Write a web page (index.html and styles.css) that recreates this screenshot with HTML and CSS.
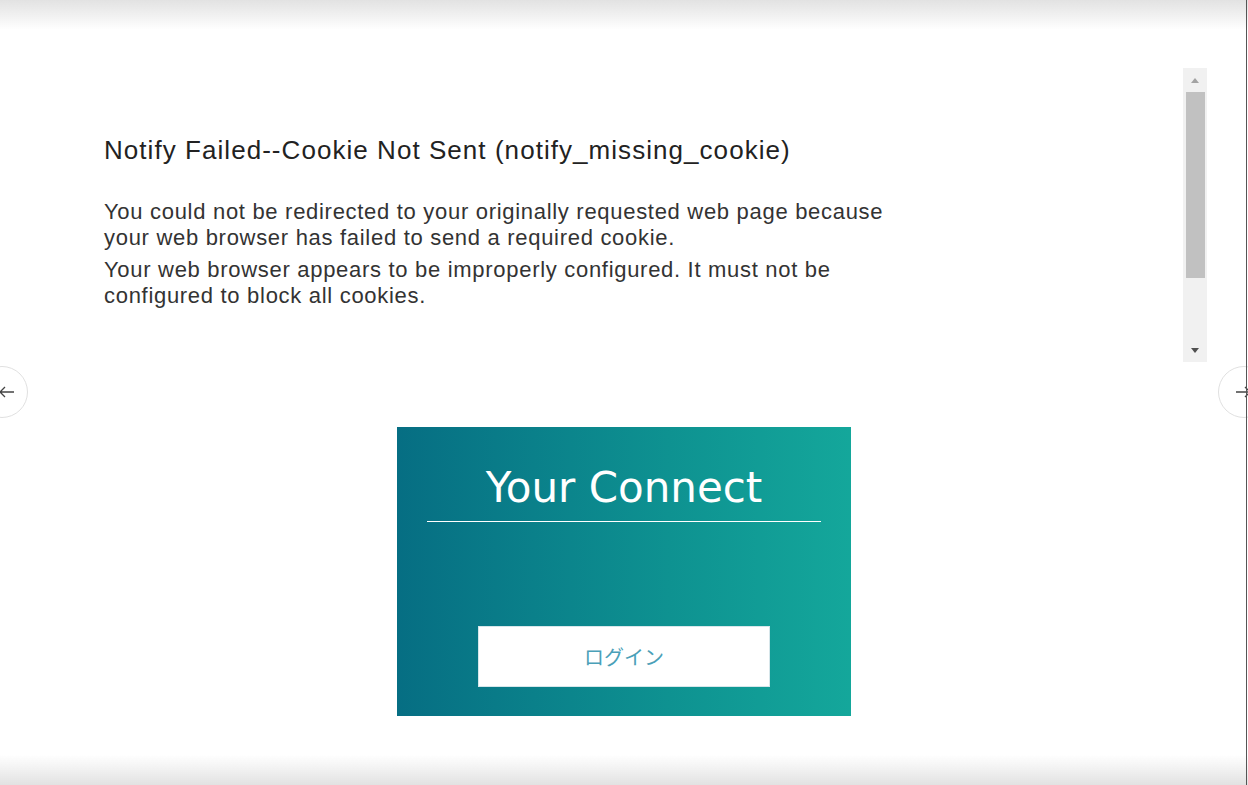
FILE: index.html
```html
<!DOCTYPE html>
<html lang="ja">
<head>
<meta charset="UTF-8" />
<meta name="viewport" content="width=device-width, initial-scale=1" />
<title>Your Connect</title>
<link rel="stylesheet" href="styles.css">
</head>
<body>

<div class="shade shade-top"></div>

<div class="stage">
  <!-- エラーメッセージ枠 -->
  <div class="frame">
    <div class="frame-body">
      <h1 class="err-title">Notify Failed--Cookie Not Sent (notify_missing_cookie)</h1>
      <p>You could not be redirected to your originally requested web page because your web browser has failed to send a required cookie.</p>
      <p>Your web browser appears to be improperly configured. It must not be configured to block all cookies.</p>
    </div>
    <div class="scrollbar">
      <span class="arrow up"></span>
      <span class="thumb"></span>
      <span class="arrow down"></span>
    </div>
  </div>

  <!-- ログインカード -->
  <div class="card">
    <h2 class="card-title">Your Connect</h2>
    <button type="button" class="btn-login">ログイン</button>
  </div>
</div>

<button type="button" class="nav nav-prev" aria-label="前へ">
  <svg width="16" height="12" viewBox="0 0 16 12"><path d="M15 6H1M6 1L1 6l5 5" fill="none" stroke="#444" stroke-width="1.3"/></svg>
</button>
<button type="button" class="nav nav-next" aria-label="次へ">
  <svg width="16" height="12" viewBox="0 0 16 12"><path d="M1 6h14M10 1l5 5-5 5" fill="none" stroke="#444" stroke-width="1.3"/></svg>
</button>

<div class="shade shade-bottom"></div>
<div class="edge"></div>

</body>
</html>
```

FILE: styles.css
```css
html, body {
  height: 100%;
}
body {
  margin: 0;
  background: #fff;
  font-family: Arial, 'Liberation Sans', sans-serif;
  color: #333;
  overflow: hidden;
}
.shade {
  position: fixed;
  left: 0;
  right: 0;
  height: 30px;
  pointer-events: none;
}
.shade-top {
  top: 0;
  background: linear-gradient(#e2e2e2, rgba(255,255,255,0));
}
.shade-bottom {
  bottom: 0;
  background: linear-gradient(rgba(255,255,255,0), #e2e2e2);
}
.edge {
  position: fixed;
  top: 0;
  bottom: 0;
  right: 1px;
  width: 1px;
  background: #555;
}
.stage {
  padding-top: 68px;
}
.frame {
  display: flex;
  height: 294px;
  margin-left: 104px;
  width: 1103px;
}
.frame-body {
  flex: 1;
  padding-top: 66px;
}
.err-title {
  margin: 0 0 33px;
  font-size: 26px;
  font-weight: 400;
  line-height: 32px;
  letter-spacing: 1.05px;
  color: #222;
}
.frame-body p {
  width: 800px;
  margin: 0 0 6px;
  font-size: 22px;
  line-height: 26px;
  letter-spacing: 0.7px;
}
.scrollbar {
  width: 24px;
  background: #f1f1f1;
  display: flex;
  flex-direction: column;
  align-items: center;
}
.arrow {
  width: 0;
  height: 0;
  border-left: 4px solid transparent;
  border-right: 4px solid transparent;
  margin: 10px 0 9px;
}
.arrow.up {
  border-bottom: 5px solid #a3a3a3;
}
.arrow.down {
  border-top: 5px solid #505050;
  margin: auto 0 9px;
}
.thumb {
  width: 19px;
  height: 186px;
  background: #c1c1c1;
}
.card {
  width: 454px;
  height: 289px;
  margin: 65px auto 0;
  box-sizing: border-box;
  padding: 0 30px;
  background: linear-gradient(90deg, #066e83, #0e9291 60%, #14a79b);
  text-align: center;
}
.card-title {
  margin: 0;
  padding: 35px 0 7px;
  font-family: 'DejaVu Sans', Verdana, sans-serif;
  font-size: 42px;
  font-weight: 400;
  line-height: 52px;
  color: #fff;
  border-bottom: 1px solid #fff;
}
.btn-login {
  display: block;
  width: 292px;
  height: 61px;
  margin: 104px auto 0;
  background: #fff;
  border: 1px solid #d6e6ea;
  font-family: 'Noto Sans CJK JP', sans-serif;
  font-size: 20px;
  color: #4aa0b8;
  cursor: pointer;
}
.nav {
  position: fixed;
  top: 366px;
  width: 52px;
  height: 52px;
  border-radius: 50%;
  border: 1px solid #e0e0e0;
  background: #fff;
  padding: 0;
  display: flex;
  align-items: center;
  cursor: pointer;
}
.nav-prev {
  left: -24px;
  justify-content: flex-end;
  padding-right: 12px;
}
.nav-next {
  right: -22px;
  justify-content: flex-start;
  padding-left: 16px;
}
```
